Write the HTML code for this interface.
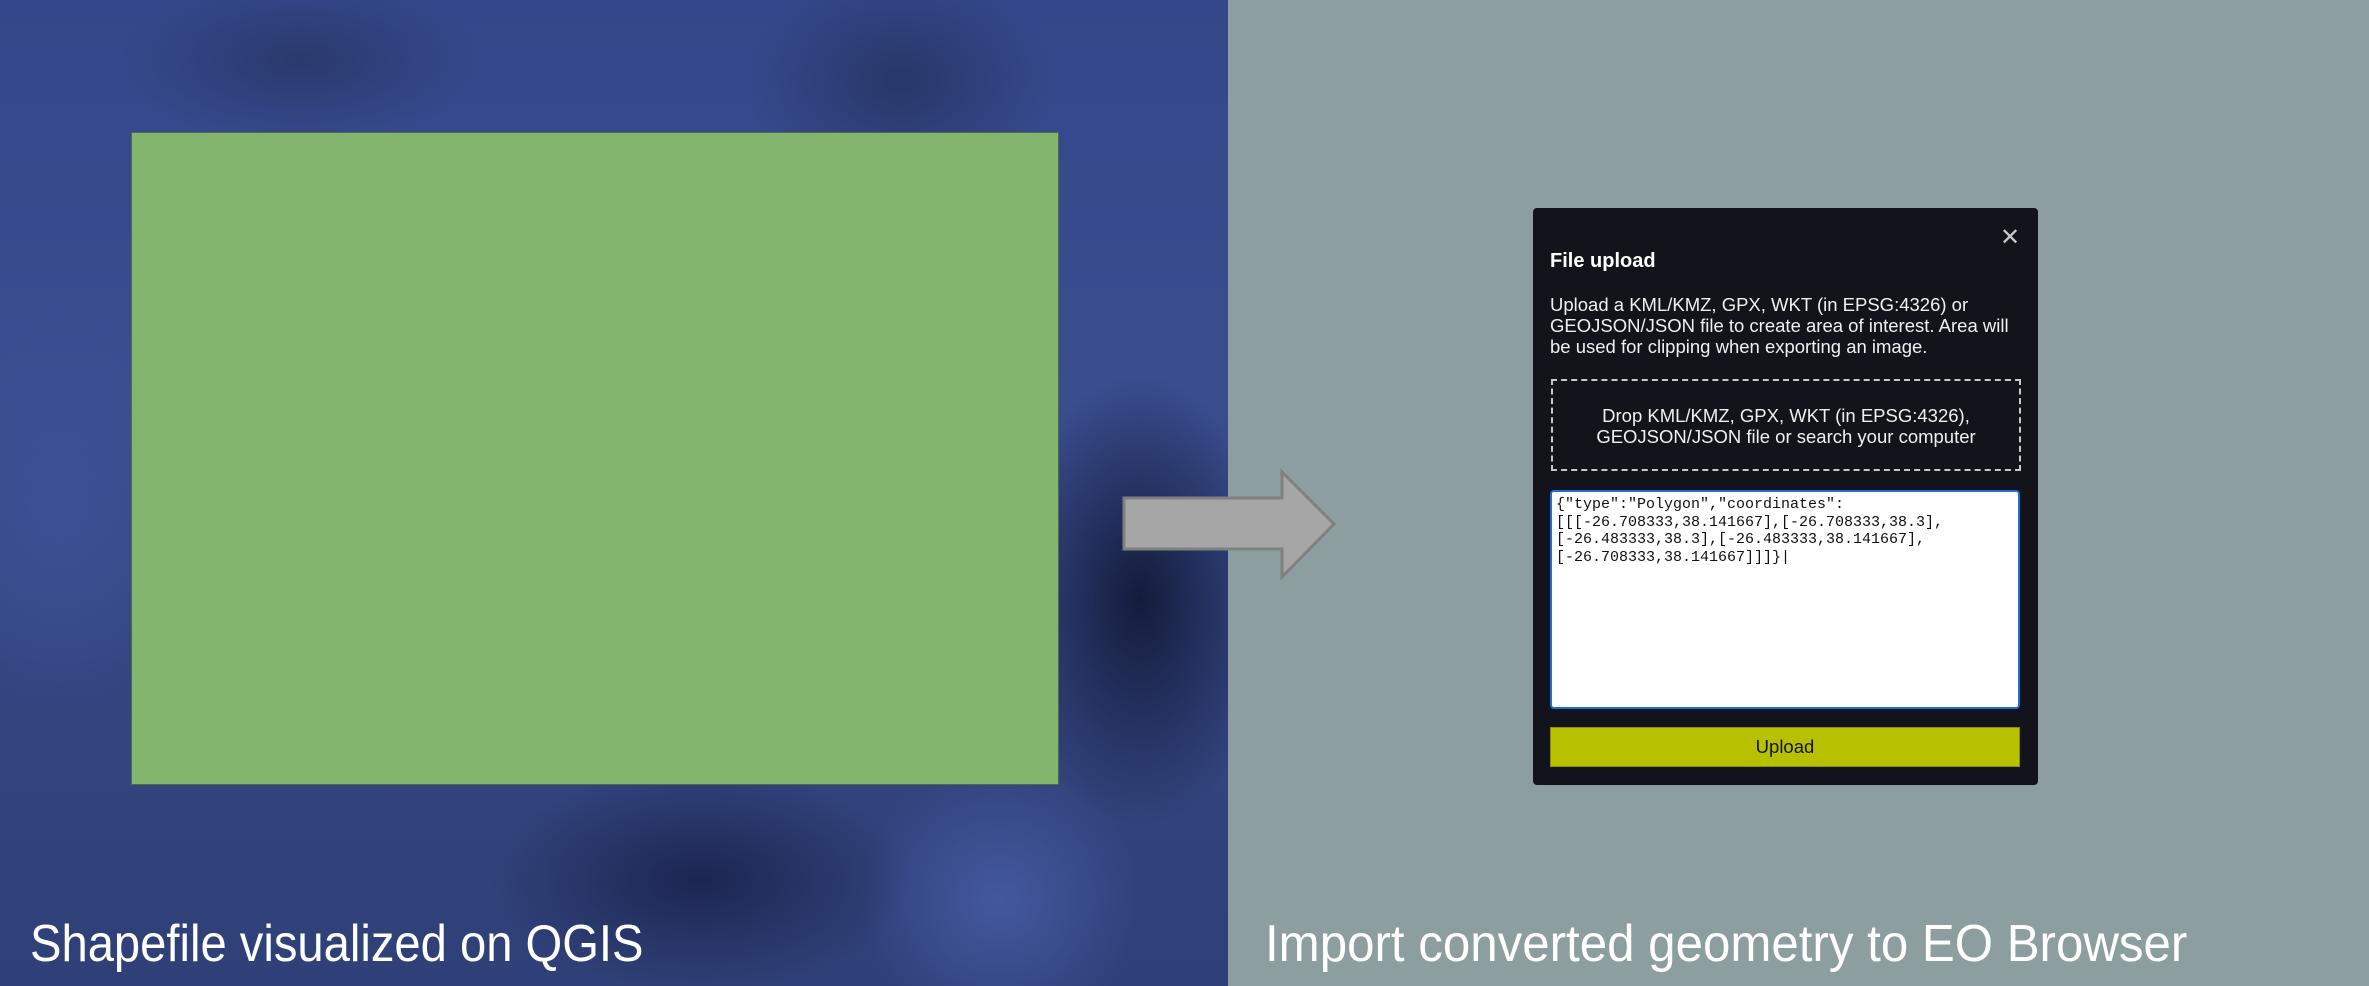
<!DOCTYPE html>
<html><head><meta charset="utf-8"><style>
*{margin:0;padding:0;box-sizing:border-box}
body{width:2369px;height:986px;overflow:hidden;position:relative;background:#8d9ea0;font-family:"Liberation Sans",sans-serif}
#left{position:absolute;left:0;top:0;width:1228px;height:986px;overflow:hidden;
background:
radial-gradient(ellipse 260px 120px at 300px 60px,#2a3a6e 0%,transparent 70%),
radial-gradient(ellipse 220px 160px at 900px 80px,#283769 0%,transparent 70%),
radial-gradient(ellipse 180px 300px at 1140px 600px,#141c3c 0%,transparent 75%),
radial-gradient(ellipse 300px 160px at 700px 880px,#1c2650 0%,transparent 70%),
radial-gradient(ellipse 200px 200px at 1000px 900px,#44589e 0%,transparent 70%),
radial-gradient(ellipse 200px 300px at 60px 500px,#3d5094 0%,transparent 70%),
linear-gradient(180deg,#34478a 0%,#3a4d8f 40%,#33457f 70%,#2f4078 100%)}
.g{position:absolute;left:131px;top:132px;width:928px;height:653px;background:#84b56f;border:1px solid #4e6a48}
.cap{position:absolute;color:#fff;font-size:52px;white-space:nowrap;transform-origin:0 0;line-height:1}
#dlg{position:absolute;left:1533px;top:208px;width:505px;height:577px;background:#12131b;border-radius:4px;color:#fff}
.x{position:absolute;left:467px;top:18px;font-size:24px;color:#c8c8cc;line-height:1}
h1{position:absolute;left:17px;top:42px;font-size:20px;font-weight:bold}
.p{position:absolute;left:17px;top:86px;font-size:18.5px;line-height:21px;color:#f0f0f0;white-space:nowrap}
.drop{position:absolute;left:18px;top:171px;width:470px;height:92px;border:2px dashed #c8c8c8;text-align:center;font-size:18.5px;line-height:21px;padding-top:24px;color:#f0f0f0;white-space:nowrap}
.ta{position:absolute;left:17px;top:282px;width:470px;height:219px;background:#fff;border:2px solid #1a6fdb;border-radius:4px;color:#111;font-family:"Liberation Mono",monospace;font-size:15px;line-height:17.5px;padding:4px 4px;white-space:pre}
.btn{position:absolute;left:17px;top:519px;width:470px;height:40px;background:#b8c100;border:1px solid #8a9000;color:#111;font-size:18.5px;text-align:center;line-height:38px}
</style></head><body>
<div id="left"><div class="g"></div>
<div class="cap" style="left:30px;top:918px;transform:scaleX(0.907)">Shapefile visualized on QGIS</div>
</div>
<div class="cap" style="left:1265px;top:918px;transform:scaleX(0.947)">Import converted geometry to EO Browser</div>
<svg style="position:absolute;left:0;top:0" width="2369" height="986"><polygon points="1124,498 1282,498 1282,472 1334,524 1282,577 1282,549 1124,549" fill="#a6a6a6" stroke="#808080" stroke-width="3"/></svg>
<div id="dlg">
<div class="x">✕</div>
<h1>File upload</h1>
<div class="p">Upload a KML/KMZ, GPX, WKT (in EPSG:4326) or<br>GEOJSON/JSON file to create area of interest. Area will<br>be used for clipping when exporting an image.</div>
<div class="drop">Drop KML/KMZ, GPX, WKT (in EPSG:4326),<br>GEOJSON/JSON file or search your computer</div>
<div class="ta">{"type":"Polygon","coordinates":
[[[-26.708333,38.141667],[-26.708333,38.3],
[-26.483333,38.3],[-26.483333,38.141667],
[-26.708333,38.141667]]]}|</div>
<div class="btn">Upload</div>
</div>
</body></html>
